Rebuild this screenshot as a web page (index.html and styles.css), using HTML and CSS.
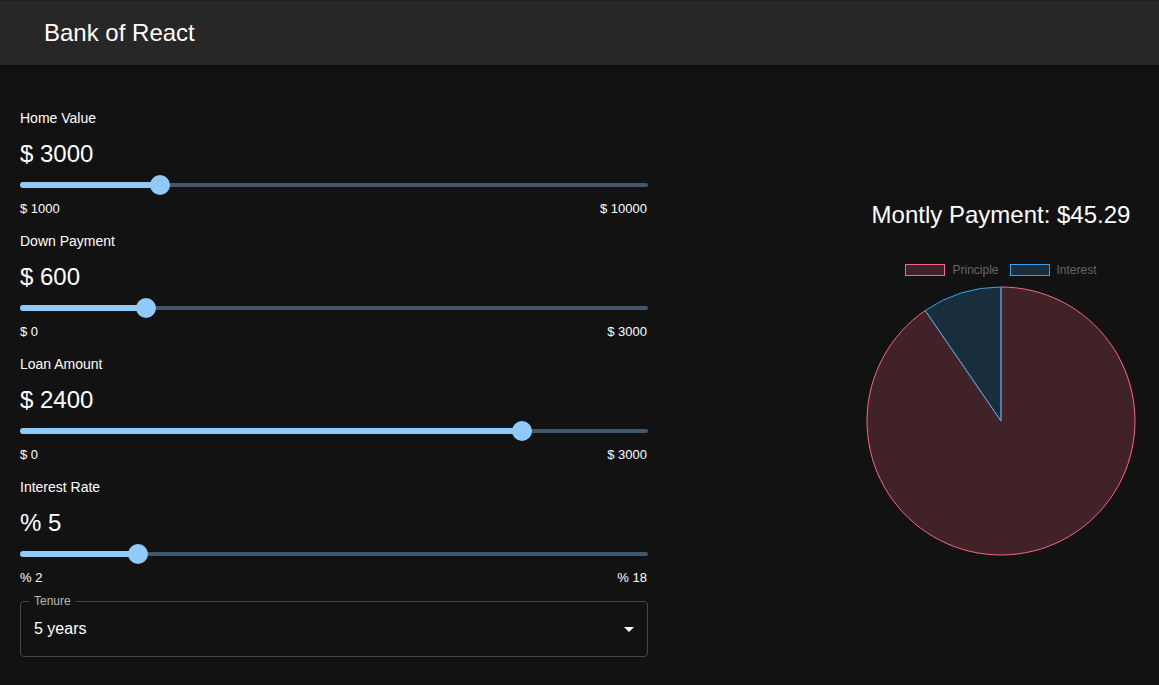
FILE: index.html
```html
<!DOCTYPE html>
<html lang="en">
<head>
<meta charset="utf-8">
<title>Bank of React</title>
<link rel="stylesheet" href="styles.css">
</head>
<body>
<header class="appbar">
  <h1 class="brand">Bank of React</h1>
</header>
<main class="main">
  <section class="form">
    <div class="field">
      <div class="field-label">Home Value</div>
      <div class="field-value">$ 3000</div>
      <div class="slider">
        <div class="rail"></div>
        <div class="track" style="width: 22.22%"></div>
        <div class="thumb" style="left: 22.22%"></div>
      </div>
      <div class="range"><span>$ 1000</span><span>$ 10000</span></div>
    </div>
    <div class="field">
      <div class="field-label">Down Payment</div>
      <div class="field-value">$ 600</div>
      <div class="slider">
        <div class="rail"></div>
        <div class="track" style="width: 20%"></div>
        <div class="thumb" style="left: 20%"></div>
      </div>
      <div class="range"><span>$ 0</span><span>$ 3000</span></div>
    </div>
    <div class="field">
      <div class="field-label">Loan Amount</div>
      <div class="field-value">$ 2400</div>
      <div class="slider">
        <div class="rail"></div>
        <div class="track" style="width: 80%"></div>
        <div class="thumb" style="left: 80%"></div>
      </div>
      <div class="range"><span>$ 0</span><span>$ 3000</span></div>
    </div>
    <div class="field">
      <div class="field-label">Interest Rate</div>
      <div class="field-value">% 5</div>
      <div class="slider">
        <div class="rail"></div>
        <div class="track" style="width: 18.75%"></div>
        <div class="thumb" style="left: 18.75%"></div>
      </div>
      <div class="range"><span>% 2</span><span>% 18</span></div>
    </div>
    <div class="select">
      <span class="select-label">Tenure</span>
      <span class="select-value">5 years</span>
      <svg class="select-icon" viewBox="0 0 24 24" width="24" height="24"><path d="M7 10l5 5 5-5z" fill="#fff"/></svg>
    </div>
  </section>
  <div class="spacer"></div>
  <section class="chart">
    <h2 class="payment">Montly Payment: $45.29</h2>
    <div class="legend">
      <span class="legend-item"><span class="swatch swatch-principle"></span>Principle</span>
      <span class="legend-item"><span class="swatch swatch-interest"></span>Interest</span>
    </div>
    <svg class="pie" viewBox="0 0 270 270" width="270" height="270">
      <path d="M135 135 L135 1 A134 134 0 1 1 59.2 24.5 Z" fill="rgba(255,99,132,0.2)" stroke="#ff6384" stroke-width="1"/>
      <path d="M135 135 L59.2 24.5 A134 134 0 0 1 135 1 Z" fill="rgba(54,162,235,0.2)" stroke="#36a2eb" stroke-width="1"/>
    </svg>
  </section>
</main>
</body>
</html>
```

FILE: styles.css
```css
* { box-sizing: border-box; }

html, body {
  margin: 0;
  padding: 0;
  background: #121212;
  color: #fff;
  font-family: "Liberation Sans", Arial, Helvetica, sans-serif;
}

.appbar {
  height: 65px;
  background: #272727;
  border-top: 1px solid #1d1d1d;
  display: flex;
  align-items: center;
  padding: 0 44px;
  box-shadow: 0 2px 4px -1px rgba(0,0,0,0.2), 0 4px 5px 0 rgba(0,0,0,0.14), 0 1px 10px 0 rgba(0,0,0,0.12);
}

.brand {
  margin: 0;
  font-size: 24px;
  font-weight: 400;
  line-height: 28px;
  color: #fff;
}

.main {
  display: grid;
  grid-template-columns: 628px 1fr 300px;
  padding: 43px 8px 0 20px;
}

.field {
  padding-bottom: 14px;
}

.field-label {
  font-size: 14px;
  line-height: 20px;
}

.field-value {
  font-size: 24px;
  line-height: 32px;
  margin-top: 10px;
}

.slider {
  position: relative;
  height: 20px;
  margin-top: 5px;
}

.rail {
  position: absolute;
  left: 0;
  right: 0;
  top: 8px;
  height: 4px;
  border-radius: 2px;
  background: #42586a;
}

.track {
  position: absolute;
  left: 0;
  top: 7px;
  height: 6px;
  border-radius: 3px;
  background: #90caf9;
}

.thumb {
  position: absolute;
  top: 0;
  width: 20px;
  height: 20px;
  margin-left: -10px;
  border-radius: 50%;
  background: #90caf9;
}

.range {
  display: flex;
  justify-content: space-between;
  font-size: 13px;
  line-height: 16px;
  margin-top: 6px;
  padding-right: 1px;
}

.select {
  position: relative;
  height: 56px;
  margin-top: 1px;
  border: 1px solid #484848;
  border-radius: 4px;
  display: flex;
  align-items: center;
  padding: 0 6px 0 13px;
}

.select-label {
  position: absolute;
  left: 8px;
  top: -8px;
  padding: 0 5px;
  background: #121212;
  font-size: 12px;
  line-height: 14px;
  color: rgba(255,255,255,0.7);
}

.select-value {
  flex: 1;
  font-size: 16px;
  line-height: 20px;
}

.select-icon {
  display: block;
}

.chart {
  display: flex;
  flex-direction: column;
  align-items: center;
}

.payment {
  margin: 93px 0 0;
  font-size: 24px;
  font-weight: 400;
  line-height: 28px;
  white-space: nowrap;
}

.legend {
  display: flex;
  gap: 11px;
  margin-top: 35px;
  height: 12px;
  align-items: center;
}

.legend-item {
  display: flex;
  align-items: center;
  gap: 7px;
  font-size: 12px;
  line-height: 12px;
  color: #666;
}

.swatch {
  display: block;
  width: 40px;
  height: 12px;
  border: 1px solid;
}

.swatch-principle {
  background: rgba(255,99,132,0.2);
  border-color: #ff6384;
}

.swatch-interest {
  background: rgba(54,162,235,0.2);
  border-color: #36a2eb;
}

.pie {
  display: block;
  margin-top: 10px;
}
```
